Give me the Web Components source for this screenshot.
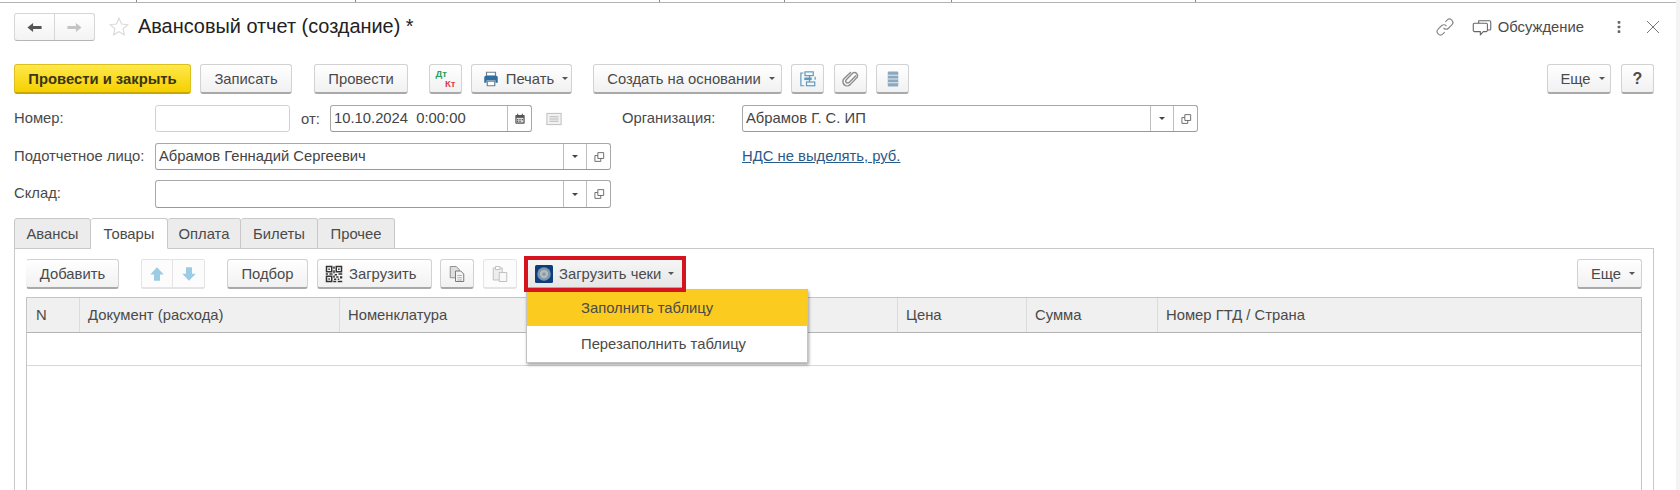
<!DOCTYPE html>
<html lang="ru">
<head>
<meta charset="utf-8">
<title>Авансовый отчет</title>
<style>
html, body { margin: 0; background: #fff; }
body { font: 14.8px "Liberation Sans", Arial, sans-serif; color: #4a4a4a; }
</style>
</head>
<body>
<erp-page>
  <erp-titlebar>
    <erp-nav></erp-nav>
    <erp-icon name="star" style="margin-left:13px;width:22px;height:22px"></erp-icon>
    <h1 style="margin:0 0 0 8px;padding-bottom:2px;font:19.9px 'Liberation Sans',Arial,sans-serif;color:#222">Авансовый отчет (создание) *</h1>
    <erp-icon name="link" slot="right" style="width:20px;height:20px"></erp-icon>
    <erp-icon name="chat" slot="right" style="width:20px;height:20px;margin-left:17px"></erp-icon>
    <span slot="right" style="margin-left:6px">Обсуждение</span>
    <erp-icon name="dots" slot="right" style="width:16px;height:16px;margin-left:27px"></erp-icon>
    <erp-icon name="close" slot="right" style="width:16px;height:16px;margin-left:18px"></erp-icon>
  </erp-titlebar>

  <erp-toolbar style="margin-top:23px;padding:0 22px 0 14px">
    <erp-btn primary style="width:177px">Провести и закрыть</erp-btn>
    <erp-btn style="width:92px;margin-left:9px">Записать</erp-btn>
    <erp-btn style="width:94px;margin-left:22px">Провести</erp-btn>
    <erp-btn style="width:33px;margin-left:21px"><erp-dtkt></erp-dtkt></erp-btn>
    <erp-btn caret style="width:101px;margin-left:9px"><erp-icon name="print" slot="icon"></erp-icon>Печать</erp-btn>
    <erp-btn caret style="width:189px;margin-left:21px">Создать на основании</erp-btn>
    <erp-btn style="width:33px;margin-left:9px"><erp-icon name="struct"></erp-icon></erp-btn>
    <erp-btn style="width:33px;margin-left:10px"><erp-icon name="clip"></erp-icon></erp-btn>
    <erp-btn style="width:33px;margin-left:9px"><erp-icon name="list"></erp-icon></erp-btn>
    <erp-btn caret style="width:64px;margin-left:auto">Еще</erp-btn>
    <erp-btn style="width:33px;margin-left:10px;font-weight:bold;font-size:16px">?</erp-btn>
  </erp-toolbar>

  <erp-form>
    <erp-label>Номер:</erp-label>
    <div style="display:flex;align-items:center">
      <erp-field style="width:135px"></erp-field>
      <span style="margin-left:11px;width:29px">от:</span>
      <erp-field date value="10.10.2024  0:00:00" style="width:202px"></erp-field>
      <erp-icon name="note" style="margin-left:13px;width:18px;height:18px"></erp-icon>
    </div>
    <erp-label style="padding-left:11px">Организация:</erp-label>
    <erp-field select value="Абрамов Г. С. ИП"></erp-field>

    <erp-label>Подотчетное лицо:</erp-label>
    <erp-field select value="Абрамов Геннадий Сергеевич"></erp-field>
    <span></span>
    <a href="#" style="color:#2a5a8b;line-height:27px">НДС не выделять, руб.</a>

    <erp-label>Склад:</erp-label>
    <erp-field select style="height:28px"></erp-field>
  </erp-form>

  <erp-tabs style="margin:10px 22px 0 14px">
    <erp-tab slot="tabs" style="width:77px">Авансы</erp-tab>
    <erp-tab slot="tabs" active style="width:77px">Товары</erp-tab>
    <erp-tab slot="tabs" style="width:73px">Оплата</erp-tab>
    <erp-tab slot="tabs" style="width:77px">Билеты</erp-tab>
    <erp-tab slot="tabs" style="width:77px">Прочее</erp-tab>

    <erp-toolbar>
      <erp-btn style="width:93px;border-left-color:transparent">Добавить</erp-btn>
      <erp-btn faint style="width:32px;margin-left:22px;border-radius:2px 0 0 2px"><erp-icon name="up"></erp-icon></erp-btn>
      <erp-btn faint style="width:32px;border-left:0;border-radius:0 2px 2px 0"><erp-icon name="down"></erp-icon></erp-btn>
      <erp-btn style="width:81px;margin-left:22px">Подбор</erp-btn>
      <erp-btn style="width:115px;margin-left:9px;justify-content:flex-start;padding-left:7px"><erp-icon name="qr" slot="icon"></erp-icon>Загрузить</erp-btn>
      <erp-btn style="width:34px;margin-left:8px"><erp-icon name="copy"></erp-icon></erp-btn>
      <erp-btn faint style="width:34px;margin-left:9px"><erp-icon name="paste" style="opacity:.45"></erp-icon></erp-btn>
      <erp-dropdown style="margin-left:11px" label="Загрузить чеки">
        <erp-menu-item active>Заполнить таблицу</erp-menu-item>
        <erp-menu-item>Перезаполнить таблицу</erp-menu-item>
      </erp-dropdown>
      <erp-btn caret style="width:65px;margin-left:auto">Еще</erp-btn>
    </erp-toolbar>

    <erp-grid style="margin-top:8px">
      <erp-col style="width:53px">N</erp-col>
      <erp-col style="width:260px">Документ (расхода)</erp-col>
      <erp-col style="width:558px">Номенклатура</erp-col>
      <erp-col style="width:129px">Цена</erp-col>
      <erp-col style="width:131px">Сумма</erp-col>
      <erp-col style="flex:1">Номер ГТД / Страна</erp-col>
    </erp-grid>
  </erp-tabs>
</erp-page>

<script>
const ICONS = {
  star: '<path d="M12 2.5l2.8 6.2 6.7.7-5 4.5 1.4 6.6-5.9-3.4-5.9 3.4 1.4-6.6-5-4.5 6.7-.7z" fill="#fff" stroke="#dcdcdc" stroke-width="1.3"/>',
  back: '<path d="M2 12l8-6.5V10h12v4H10v4.5z" fill="#555"/>',
  forward: '<path d="M22 12l-8-6.5V10H2v4h12v4.5z" fill="#c4c4c4"/>',
  link: '<g fill="none" stroke="#8a8a8a" stroke-width="1.4" stroke-linecap="round"><path d="M10.5 13.5a4 4 0 0 0 5.7 0l4-4a4 4 0 0 0-5.7-5.7l-1.8 1.8"/><path d="M13.5 10.5a4 4 0 0 0-5.7 0l-4 4a4 4 0 0 0 5.7 5.7l1.8-1.8"/></g>',
  chat: '<g fill="#fff" stroke="#666" stroke-width="1.3" stroke-linejoin="round"><path d="M8 4.5h13a1.5 1.5 0 0 1 1.5 1.5v8a1.5 1.5 0 0 1-1.5 1.5H8z"/><path d="M3 7.5h14a1.5 1.5 0 0 1 1.5 1.5v7a1.5 1.5 0 0 1-1.5 1.5h-3.5L10 21.5v-4H3A1.5 1.5 0 0 1 1.5 16V9A1.5 1.5 0 0 1 3 7.5z"/></g>',
  dots: '<g fill="#666"><rect x="10" y="3" width="4" height="4" rx="1"/><rect x="10" y="10" width="4" height="4" rx="1"/><rect x="10" y="17" width="4" height="4" rx="1"/></g>',
  close: '<path d="M3 3l18 18M21 3L3 21" stroke="#777" stroke-width="1.5" fill="none"/>',
  print: '<path d="M6 3h12v5H6z" fill="#fff" stroke="#6b7f92" stroke-width="1.6"/><path d="M3 9.500a2 2 0 0 1 2-2h14a2 2 0 0 1 2 2V17h-3v-3H6v3H3z" fill="#2f6c9f"/><path d="M7 15h10v6H7z" fill="#fff" stroke="#6b7f92" stroke-width="1.6"/>',
  struct: '<g fill="none" stroke="#5d9ac2" stroke-width="1.6"><rect x="8" y="2.500" width="11" height="5"/><rect x="10" y="16" width="11" height="5"/><path d="M14 7.500V16M6 4H2.500v17H7M21.500 9v4"/></g><path d="M7 10h10v3.500H7z" fill="#5d9ac2"/>',
  clip: '<path d="M19.500 7.500L10 17a2.800 2.800 0 0 1-4-4l9.500-9.500a4.500 4.500 0 0 1 6 6L11.500 20a6 6 0 0 1-8.500-8.500L12 3" transform="translate(0 .5) scale(.95)" fill="none" stroke="#8b8b8b" stroke-width="2" stroke-linecap="round"/>',
  list: '<rect x="5" y="2" width="14" height="20" rx="1.500" fill="#8aa8c0"/><path d="M5 7h14M5 12h14M5 17h14" stroke="#dfe8ef" stroke-width="1.500"/>',
  calendar: '<rect x="4" y="5" width="16" height="15" rx="1.500" fill="#555"/><path d="M8 3v4M16 3v4" stroke="#555" stroke-width="2"/><path d="M6 10h12v8H6z" fill="#ddd"/><path d="M7 12h2v2H7zM11 12h2v2h-2zM15 12h2v2h-2zM7 15h2v2H7zM11 15h2v2h-2z" fill="#555"/>',
  note: '<rect x="2.500" y="4.500" width="19" height="15" fill="#f2f2f2" stroke="#bdbdbd" stroke-width="1.300"/><path d="M6 9h12M6 12h12M6 15h12" stroke="#b5b5b5" stroke-width="1.300"/>',
  open: '<path d="M10 4.500h10v10H10z" fill="none" stroke="#666" stroke-width="1.600"/><path d="M10 9.500H5v10h10v-5" fill="none" stroke="#666" stroke-width="1.600"/>',
  up: '<path d="M12 3l9 9.500h-5V21H8v-8.500H3z" fill="#9ccbe6"/>',
  down: '<path d="M12 21l9-9.500h-5V3H8v8.500H3z" fill="#9ccbe6"/>',
  qr: '<g fill="#333"><path d="M1 1h9v9H1zm2 2v5h5V3z" fill-rule="evenodd"/><path d="M14 1h9v9h-9zm2 2v5h5V3z" fill-rule="evenodd"/><path d="M1 14h9v9H1zm2 2v5h5v-5z" fill-rule="evenodd"/><path d="M4.500 4.500h2v2h-2zM17.500 4.500h2v2h-2zM4.500 17.500h2v2h-2zM11 2h2v3h-2zM11 7h2v4h-2zM1 11h3v2H1zM6 11h4v2H6zM13 12h3v2h-3zM18 11h5v2h-5zM11 14h2v3h-2zM15 15h3v2h-3zM20 15h3v3h-3zM12 18h3v2h-3zM17 18h2v2h-2zM11 21h4v2h-4zM17 21h6v2h-6z"/></g>',
  copy: '<path d="M3 2h8l4 4v11H3z" fill="#dedede" stroke="#8e8e8e" stroke-width="1.300"/><path d="M10 8h7l4 4v10H10z" fill="#f3f3f3" stroke="#777" stroke-width="1.300"/><path d="M12.500 14h6M12.500 17h6M12.500 20h6" stroke="#999"/>',
  paste: '<path d="M3 4h12v16H3z" fill="#ddd" stroke="#777" stroke-width="1.300"/><path d="M6 2h6v4H6z" fill="#fff" stroke="#777" stroke-width="1.300"/><path d="M11 10h10v12H11z" fill="#f5f5f5" stroke="#777" stroke-width="1.300"/>',
  emblem: '<rect width="24" height="24" rx="2" fill="#0e3d7c"/><circle cx="12" cy="12" r="9" fill="#7f97ad"/><circle cx="12" cy="12" r="5.500" fill="#b3bcc2"/><circle cx="12" cy="12" r="2.500" fill="#8c9ba6"/>'
};

// маленький помощник, чтобы не повторять одно и то же в каждом классе
function define(name, html, onConnect) {
  customElements.define(name, class extends HTMLElement {
    constructor() {
      super();
      this.attachShadow({ mode: "open" });
    }
    connectedCallback() {
      this.shadowRoot.innerHTML = typeof html === "function" ? html(this) : html;
      if (onConnect) onConnect(this);
    }
  });
}

const svg = (name) => `<svg viewBox="0 0 24 24" width="100%" height="100%" style="display:block">${ICONS[name]}</svg>`;

define("erp-icon", (el) => `
  <style>:host { display: inline-block; width: 18px; height: 18px; flex: none; }</style>
  ${svg(el.getAttribute("name"))}`);

define("erp-page", `
  <style>
    :host {
      display: flex; flex-direction: column; box-sizing: border-box;
      width: 1680px; height: 490px; overflow: hidden;
      border-right: 4px solid #f3f3f3;
    }
    .strip { height: 2px; flex: none; border-bottom: 1px solid #b4b4b4; display: flex; }
    .strip i { width: 1px; background: #8c8c8c; }
  </style>
  <div class="strip">
    <i style="margin-left:136px"></i><i style="margin-left:218px"></i><i style="margin-left:303px"></i>
    <i style="margin-left:124px"></i><i style="margin-left:166px"></i><i style="margin-left:243px"></i>
  </div>
  <slot></slot>`);

define("erp-titlebar", `
  <style>
    :host { display: flex; align-items: center; height: 28px; margin-top: 10px; padding: 0 15px 0 14px; flex: none; }
    .right { display: flex; align-items: center; margin-left: auto; }
  </style>
  <slot></slot>
  <div class="right"><slot name="right"></slot></div>`);

define("erp-nav", `
  <style>
    :host { display: flex; box-sizing: border-box; width: 81px; height: 28px; background: linear-gradient(#fff, #f3f3f3);
      border: 1px solid #d6d6d6; border-bottom-color: #b5b5b5; border-radius: 3px; }
    div { flex: 1; display: flex; align-items: center; justify-content: center; }
    div + div { border-left: 1px solid #d6d6d6; }
    svg { width: 17px !important; height: 17px !important; }
  </style>
  <div>${svg("back")}</div><div>${svg("forward")}</div>`);

define("erp-toolbar", `
  <style>:host { display: flex; align-items: center; height: 30px; flex: none; }</style>
  <slot></slot>`);

define("erp-btn", `
  <style>
    :host {
      display: inline-flex; align-items: center; justify-content: center; gap: 6px;
      box-sizing: border-box; height: 30px; flex: none; white-space: nowrap; color: #4a4a4a;
      background: linear-gradient(#fff, #f1f1f1);
      border: 1px solid #d2d2d2; border-bottom: 2px solid #a9a9a9; border-radius: 3px;
    }
    :host([primary]) {
      background: linear-gradient(#ffe84a, #f5d000); border-color: #dcc020; border-bottom-color: #c8a800;
      color: #3a3512; font-weight: bold;
    }
    :host([faint]) { background: #fcfcfc; border-color: #e4e4e4; }
    :host([caret]) { padding-left: 7px; }
    .caret { display: none; width: 0; height: 0; margin-left: 2px; border: 3px solid transparent; border-top: 3px solid #555; border-bottom: 0; }
    :host([caret]) .caret { display: block; }
    ::slotted(erp-icon) { width: 18px; height: 18px; }
  </style>
  <slot name="icon"></slot><slot></slot><span class="caret"></span>`);

define("erp-dtkt", `
  <style>
    :host { display: block; width: 20px; font: bold 9.5px/10px "Liberation Sans", Arial, sans-serif; }
    b { display: block; color: #2f9e57; }
    b + b { color: #d8434a; text-align: right; }
  </style>
  <b>Дт</b><b>Кт</b>`);

define("erp-form", `
  <style>
    :host {
      display: grid; margin: 11px 22px 0 14px; flex: none;
      grid-template-columns: 141px 456px 131px 456px;
      grid-template-rows: 38px 37px 28px;
      align-items: start;
    }
  </style>
  <slot></slot>`);

define("erp-label", `
  <style>:host { display: block; line-height: 27px; white-space: nowrap; }</style>
  <slot></slot>`);

define("erp-field", (el) => {
  const value = el.getAttribute("value") || "";
  const select = el.hasAttribute("select");
  const date = el.hasAttribute("date");
  const filled = select || date;
  return `
  <style>
    :host {
      display: flex; box-sizing: border-box; height: 27px; background: #fff;
      border: 1px solid ${filled ? "#a8a8a8" : "#d2d2d2"}; border-radius: 3px;
      ${filled ? "border-bottom-color:#999;" : ""}
    }
    .v { flex: 1; padding-left: 3px; line-height: 25px; white-space: pre; color: #444; overflow: hidden; }
    .b { flex: none; display: flex; align-items: center; justify-content: center; border-left: 1px solid #bdbdbd; }
    .drop { width: 22px; }
    .open { width: 23px; }
    .cal { width: 23px; }
    .b svg { width: 14px !important; height: 14px !important; }
    .caret { width: 0; height: 0; border: 3px solid transparent; border-top: 3px solid #444; border-bottom: 0; }
  </style>
  <div class="v">${value}</div>
  ${select ? `<div class="b drop"><span class="caret"></span></div><div class="b open">${svg("open")}</div>` : ""}
  ${date ? `<div class="b cal">${svg("calendar")}</div>` : ""}`;
});

define("erp-tabs", `
  <style>
    :host { display: flex; flex-direction: column; flex: 1; min-height: 0; }
    .bar { display: flex; height: 31px; flex: none; position: relative; z-index: 1; margin-bottom: -1px; }
    .panel { flex: 1; border: 1px solid #c8c8c8; border-bottom: 0; padding: 10px 11px 0; }
  </style>
  <div class="bar"><slot name="tabs"></slot></div>
  <div class="panel"><slot></slot></div>`);

define("erp-tab", `
  <style>
    :host {
      display: flex; align-items: center; justify-content: center; box-sizing: border-box; height: 31px;
      background: #ececec; border: 1px solid #c8c8c8; border-left-width: 0; border-radius: 3px 3px 0 0;
    }
    :host(:first-child) { border-left-width: 1px; }
    :host([active]) { background: #fff; border-bottom-color: #fff; }
  </style>
  <slot></slot>`);

define("erp-dropdown", (el) => `
  <style>
    :host { display: block; position: relative; flex: none; }
    .btn {
      position: relative; z-index: 2; display: flex; align-items: center; box-sizing: border-box;
      width: 154px; height: 28px; padding-left: 7px; gap: 6px; background: linear-gradient(#f6f6f6, #e6e6e6);
      border-bottom: 1px solid #aaa; outline: 4px solid #d5141f; white-space: nowrap;
    }
    .btn svg { width: 18px !important; height: 18px !important; flex: none; }
    .caret { width: 0; height: 0; margin-left: 1px; border: 3px solid transparent; border-top: 3px solid #555; border-bottom: 0; }
    .menu {
      position: absolute; z-index: 1; left: -2px; top: 29px; width: 282px; box-sizing: border-box;
      background: #fff; border: 1px solid #c4c4c4; box-shadow: 1px 2px 3px rgba(0, 0, 0, .35);
    }
  </style>
  <div class="btn">${svg("emblem")}<span>${el.getAttribute("label")}</span><span class="caret"></span></div>
  <div class="menu"><slot></slot></div>`);

define("erp-menu-item", `
  <style>
    :host { display: block; height: 36px; line-height: 36px; padding-left: 54px; color: #4a4a4a; }
    :host([active]) { background: #fbcb20; }
  </style>
  <slot></slot>`);

define("erp-grid", `
  <style>
    :host { display: block; height: 200px; border: 1px solid #c4c4c4; border-bottom: 0; }
    .head { display: flex; height: 34px; background: #f0f0f0; border-bottom: 1px solid #b4b4b4; }
    .row { height: 32px; border-bottom: 1px solid #d8d8d8; }
  </style>
  <div class="head"><slot></slot></div>
  <div class="row"></div>`);

define("erp-col", `
  <style>
    :host { display: flex; align-items: center; box-sizing: border-box; padding-left: 8px; flex: none; border-right: 1px solid #dcdcdc; }
    :host(:first-child) { padding-left: 9px; }
    :host(:last-child) { border-right: 0; }
  </style>
  <slot></slot>`);
</script>
</body>
</html>
